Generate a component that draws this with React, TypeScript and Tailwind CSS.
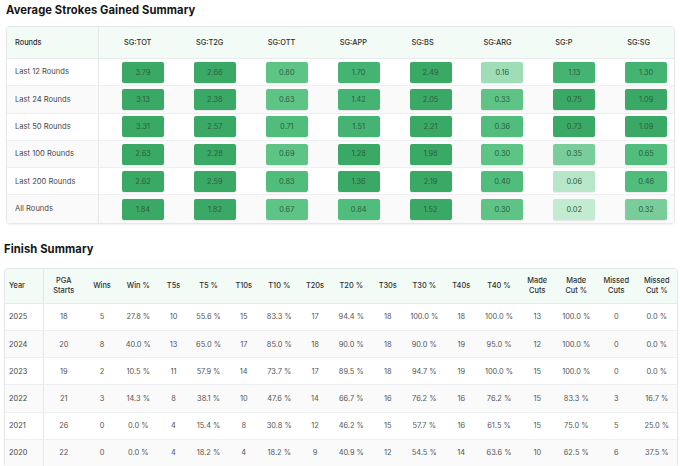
import React from "react";

type Lvl = "D" | "M1" | "M" | "M2" | "L2" | "L" | "LL" | "LLL";

const lvlClass: Record<Lvl, string> = {
  D: "bg-[#3aa966]",
  M1: "bg-[#45b472]",
  M: "bg-[#50bd7c]",
  M2: "bg-[#5dc486]",
  L2: "bg-[#78cd9a]",
  L: "bg-[#9fddb7]",
  LL: "bg-[#b7e6c8]",
  LLL: "bg-[#c2ebd1]",
};

const sgHeaders = ["SG:TOT", "SG:T2G", "SG:OTT", "SG:APP", "SG:BS", "SG:ARG", "SG:P", "SG:SG"];

const sgRows: { label: string; cells: [string, Lvl][] }[] = [
  {
    label: "Last 12 Rounds",
    cells: [["3.79", "D"], ["2.66", "D"], ["0.80", "M2"], ["1.70", "M1"], ["2.49", "D"], ["0.16", "L"], ["1.13", "M1"], ["1.30", "M1"]],
  },
  {
    label: "Last 24 Rounds",
    cells: [["3.13", "D"], ["2.38", "D"], ["0.63", "M2"], ["1.42", "M1"], ["2.05", "D"], ["0.33", "M2"], ["0.75", "D"], ["1.09", "D"]],
  },
  {
    label: "Last 50 Rounds",
    cells: [["3.31", "D"], ["2.57", "D"], ["0.71", "M"], ["1.51", "M1"], ["2.21", "D"], ["0.36", "M"], ["0.73", "D"], ["1.09", "D"]],
  },
  {
    label: "Last 100 Rounds",
    cells: [["2.63", "D"], ["2.28", "D"], ["0.69", "M2"], ["1.28", "D"], ["1.98", "D"], ["0.30", "M2"], ["0.35", "L2"], ["0.65", "M"]],
  },
  {
    label: "Last 200 Rounds",
    cells: [["2.62", "D"], ["2.59", "D"], ["0.83", "M"], ["1.36", "D"], ["2.19", "D"], ["0.40", "M"], ["0.06", "LL"], ["0.46", "M"]],
  },
  {
    label: "All Rounds",
    cells: [["1.84", "D"], ["1.82", "D"], ["0.67", "M2"], ["0.84", "M"], ["1.52", "D"], ["0.30", "M2"], ["0.02", "LLL"], ["0.32", "L2"]],
  },
];

const finishHeaders: string[][] = [
  ["Year"],
  ["PGA", "Starts"],
  ["Wins"],
  ["Win %"],
  ["T5s"],
  ["T5 %"],
  ["T10s"],
  ["T10 %"],
  ["T20s"],
  ["T20 %"],
  ["T30s"],
  ["T30 %"],
  ["T40s"],
  ["T40 %"],
  ["Made", "Cuts"],
  ["Made", "Cut %"],
  ["Missed", "Cuts"],
  ["Missed", "Cut %"],
];

const finishRows: string[][] = [
  ["2025", "18", "5", "27.8 %", "10", "55.6 %", "15", "83.3 %", "17", "94.4 %", "18", "100.0 %", "18", "100.0 %", "13", "100.0 %", "0", "0.0 %"],
  ["2024", "20", "8", "40.0 %", "13", "65.0 %", "17", "85.0 %", "18", "90.0 %", "18", "90.0 %", "19", "95.0 %", "12", "100.0 %", "0", "0.0 %"],
  ["2023", "19", "2", "10.5 %", "11", "57.9 %", "14", "73.7 %", "17", "89.5 %", "18", "94.7 %", "19", "100.0 %", "15", "100.0 %", "0", "0.0 %"],
  ["2022", "21", "3", "14.3 %", "8", "38.1 %", "10", "47.6 %", "14", "66.7 %", "16", "76.2 %", "16", "76.2 %", "15", "83.3 %", "3", "16.7 %"],
  ["2021", "26", "0", "0.0 %", "4", "15.4 %", "8", "30.8 %", "12", "46.2 %", "15", "57.7 %", "16", "61.5 %", "15", "75.0 %", "5", "25.0 %"],
  ["2020", "22", "0", "0.0 %", "4", "18.2 %", "4", "18.2 %", "9", "40.9 %", "12", "54.5 %", "14", "63.6 %", "10", "62.5 %", "6", "37.5 %"],
];

const finishGrid =
  "grid grid-cols-[39px_39.5px_37px_35.5px_35px_35px_35.5px_35.5px_36px_36.5px_36.5px_36.5px_37.5px_38px_38.5px_39.5px_40.5px_1fr]";

export default function App() {
  return (
    <div className="min-h-[466px] w-[680px] bg-white font-['Inter',sans-serif] text-[#333]">
      {/* Strokes Gained section */}
      <section className="ml-[6px] w-[669px] pt-[3px]">
        <h2 className="h-[14px] text-[11.2px] leading-[14px] font-bold tracking-[0.1px] text-[#151515]">
          Average Strokes Gained Summary
        </h2>
        <div className="mt-[9px] overflow-hidden rounded-[4px] border border-[#e5e7ea] shadow-[0_1px_2px_rgba(0,0,0,0.06)]">
          <div className="grid h-[32px] grid-cols-[92px_repeat(8,1fr)] border-b border-[#e8eaec] bg-[#f3fbf6] text-[7.4px] font-medium text-[#2f2f2f]">
            <div className="flex items-center border-r border-[#e5e7ea] pl-[8px]">Rounds</div>
            {sgHeaders.map((h) => (
              <div key={h} className="flex items-center pl-[25px]">
                {h}
              </div>
            ))}
          </div>
          {sgRows.map((r, i) => (
            <div
              key={r.label}
              className={`grid h-[27.3px] grid-cols-[92px_repeat(8,1fr)] ${
                i < sgRows.length - 1 ? "border-b border-[#eeeff1]" : ""
              } ${i % 2 === 1 ? "bg-[#fafafb]" : "bg-white"}`}
            >
              <div className="flex items-center border-r border-[#e5e7ea] pl-[8px] text-[7.6px] text-[#4a4a4a]">
                {r.label}
              </div>
              {r.cells.map(([v, l], j) => (
                <div key={j} className="flex items-center pl-[23px]">
                  <div
                    className={`flex h-[21px] w-[42px] items-center justify-center rounded-[2px] text-[7.4px] text-[#2c5e40] shadow-[0_1px_1px_rgba(0,0,0,0.08)] ${lvlClass[l]}`}
                  >
                    {v}
                  </div>
                </div>
              ))}
            </div>
          ))}
        </div>
      </section>

      {/* Finish Summary section */}
      <section className="mt-[18px] ml-[4px] w-[674px]">
        <h2 className="h-[14px] text-[11.2px] leading-[14px] font-bold tracking-[0.1px] text-[#151515]">
          Finish Summary
        </h2>
        <div className="mt-[12px] overflow-hidden rounded-[4px] border border-[#e5e7ea] shadow-[0_1px_2px_rgba(0,0,0,0.06)]">
          <div className={`${finishGrid} h-[35px] border-b border-[#e8eaec] bg-[#f3fbf6] text-[7.4px] font-medium text-[#2f2f2f]`}>
            {finishHeaders.map((h, i) => (
              <div
                key={i}
                className={
                  i === 0
                    ? "flex items-center border-r border-[#e5e7ea] pl-[4px]"
                    : "flex flex-col items-center justify-center text-center leading-[9.3px]"
                }
              >
                {h.map((t) => (
                  <span key={t}>{t}</span>
                ))}
              </div>
            ))}
          </div>
          {finishRows.map((r, i) => (
            <div
              key={r[0]}
              className={`${finishGrid} h-[27.2px] border-b border-[#eeeff1] text-[7.4px] text-[#555] ${
                i % 2 === 1 ? "bg-[#fafafb]" : "bg-white"
              }`}
            >
              {r.map((v, j) => (
                <div
                  key={j}
                  className={
                    j === 0
                      ? "flex items-center border-r border-[#e5e7ea] pl-[4px] text-[#444]"
                      : "flex items-center justify-center"
                  }
                >
                  {v}
                </div>
              ))}
            </div>
          ))}
        </div>
      </section>
    </div>
  );
}
